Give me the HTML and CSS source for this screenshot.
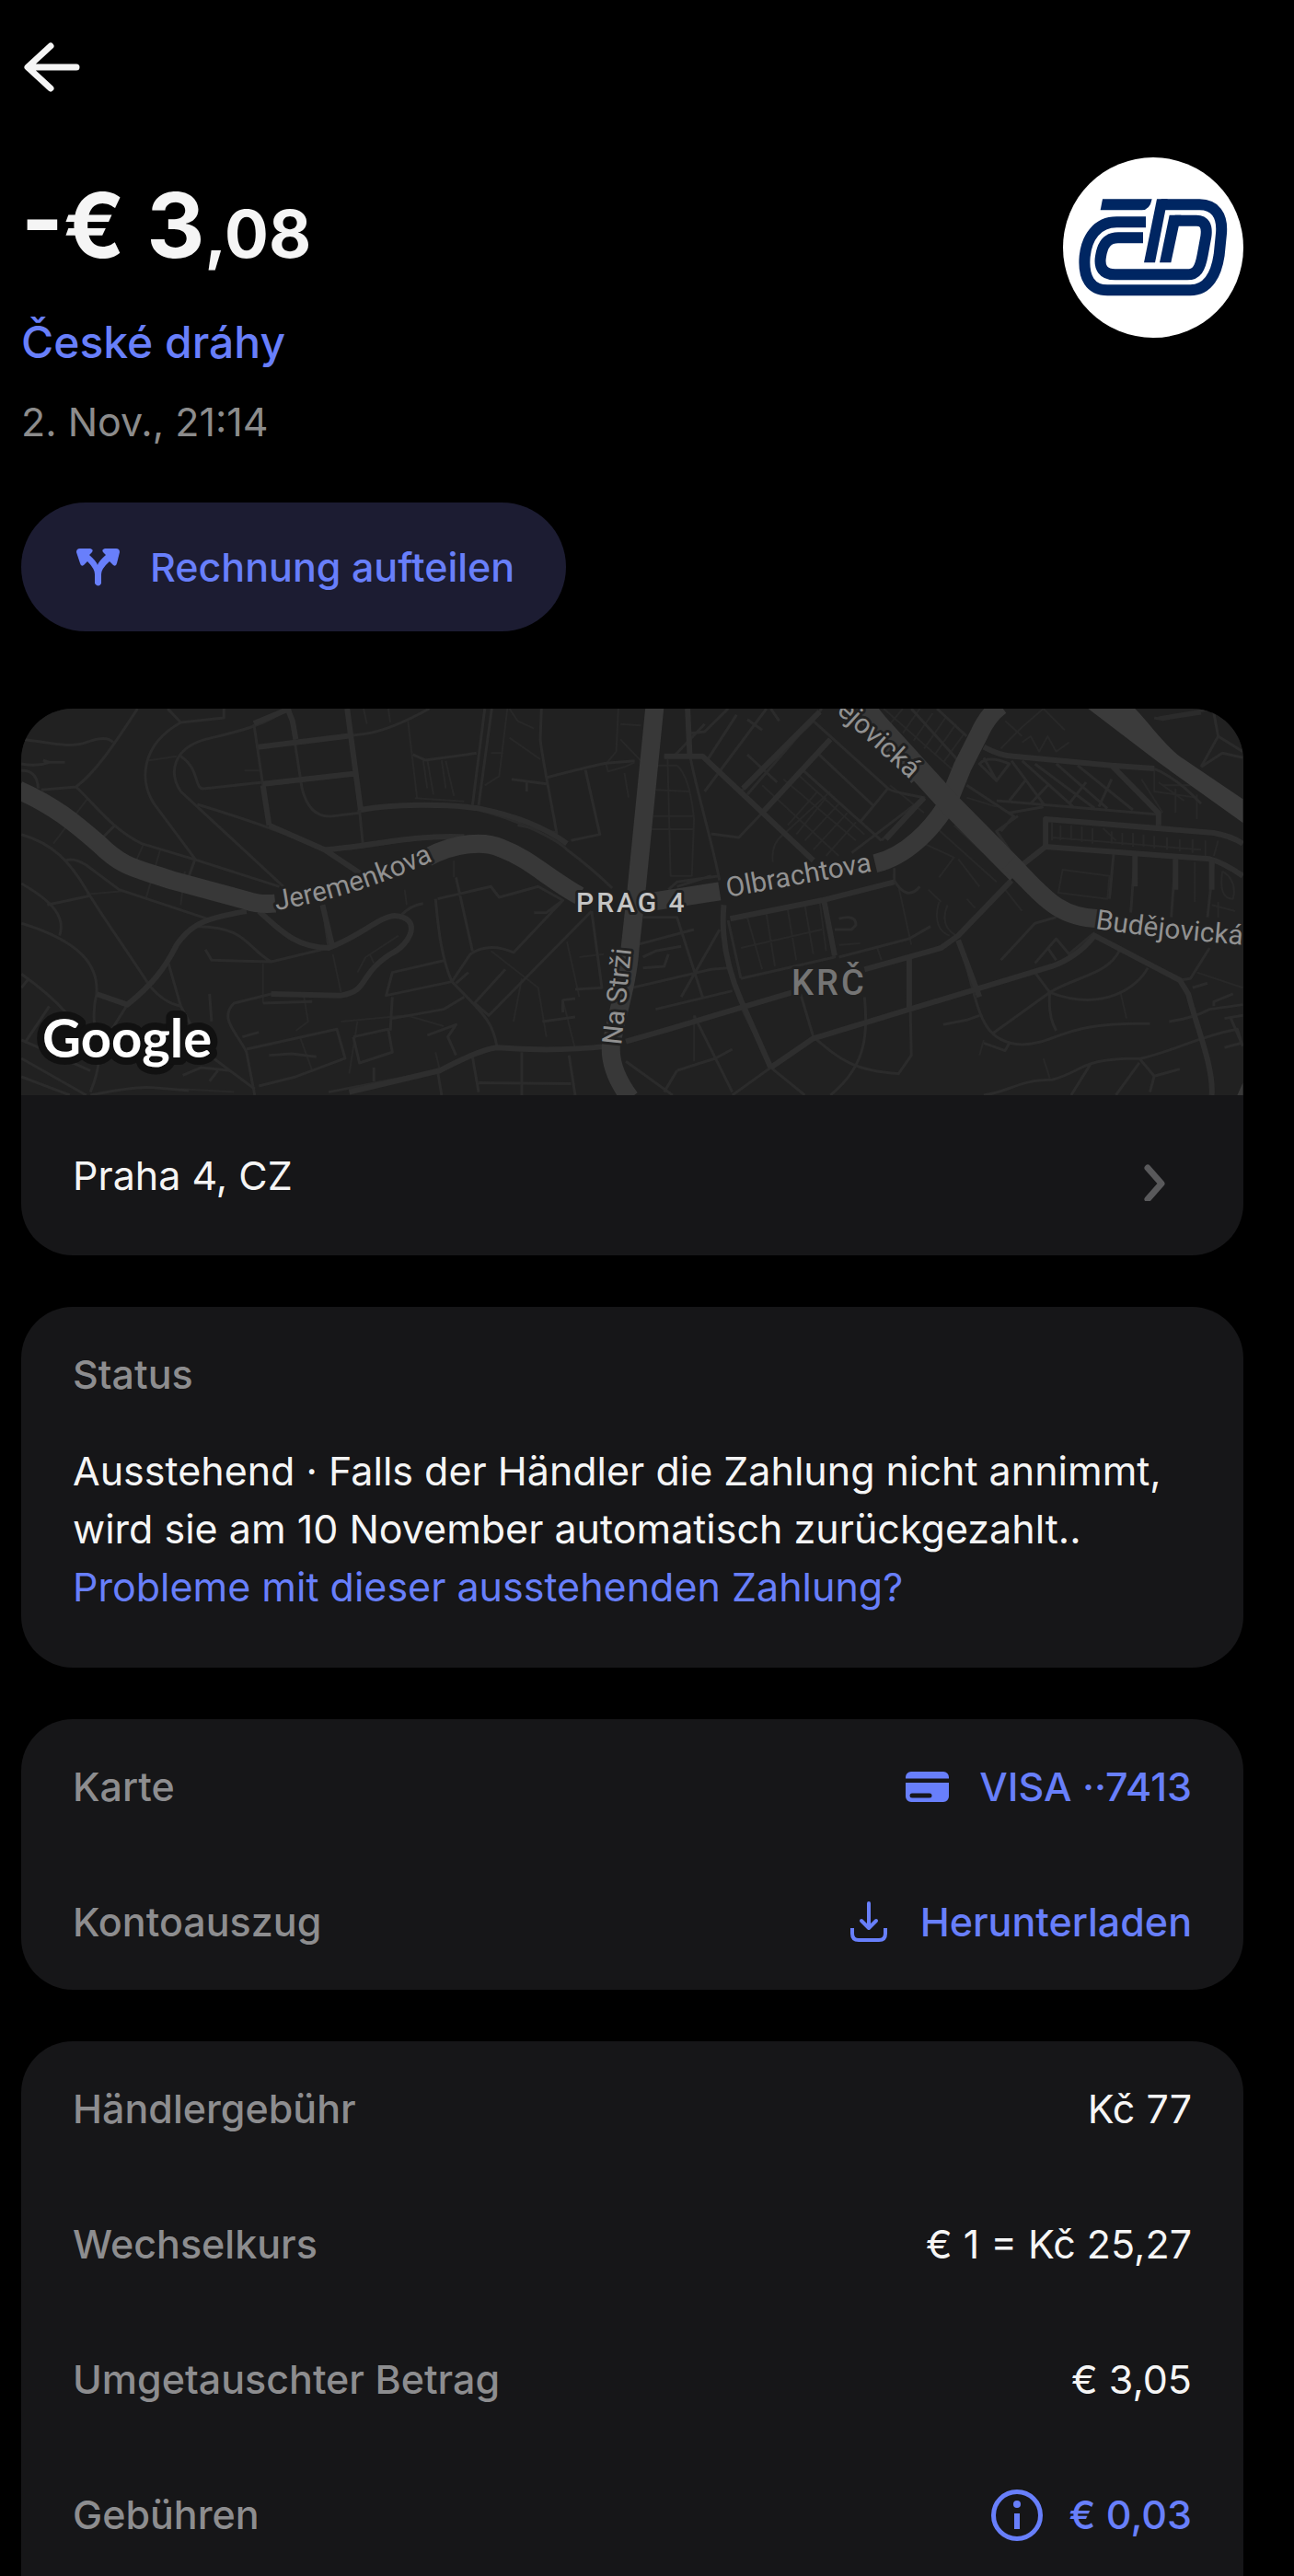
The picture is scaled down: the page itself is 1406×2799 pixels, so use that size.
FILE: index.html
```html
<!DOCTYPE html>
<html lang="de">
<head>
    <meta charset="UTF-8">
    <meta name="viewport" content="width=device-width, initial-scale=1.0">
    <title>České dráhy</title>
    <link rel="stylesheet" href="styles.css">
</head>
<body>

<main class="page">
    <button class="back" aria-label="Zurück">
        <svg width="68" height="60" viewBox="0 0 68 60"><path d="M60 30H8M32 7L7 30l25 23"/></svg>
    </button>

    <header class="summary">
        <div>
            <h1 class="amount">-€ 3<span class="cents">,08</span></h1>
            <a class="merchant" href="#">České dráhy</a>
            <p class="date">2. Nov., 21:14</p>
        </div>
        <svg class="logo" viewBox="105 62 588 588">
            <circle cx="399" cy="356" r="294" fill="#fff"/>
            <g fill="none" stroke="#002662" stroke-width="36">
                <path d="M375 273H280C215 273 182 325 176 385C170 455 195 495 250 495H520C580 495 605 440 614 380L621 310C626 250 600 216 550 216H425"/>
                <path d="M366 324H285C250 324 234 345 228 385C222 420 235 444 275 444H510C540 444 552 425 560 380L571 320C576 285 565 268 540 268H470"/>
            </g>
            <g fill="#002662">
                <path d="M234 198H395Q388 234 362 234H227Z"/>
                <path d="M411 198H446L405 405H369Z"/>
                <path d="M452 250H490L457 405H420Z"/>
            </g>
        </svg>
    </header>

    <button class="split">
        <svg class="icon" viewBox="0 0 56 56">
            <path d="M8 8h11q4 1 2 4l-3 3q8 7 9 11q1-4 9-11l-3-3q-2-3 2-4h12q4 0 4 4l-3 12q-1 4-4 2l-4-4q-9 8-9 14v10q-3 5-7 0V36q0-6-8-14l-4 4q-3 2-4-2L4 12q0-4 4-4z" fill="currentColor"/>
        </svg>
        Rechnung aufteilen
    </button>

    <section class="card">
        <svg class="map" viewBox="0 0 1328 420" preserveAspectRatio="xMidYMid slice">
            <!-- western half -->
            <g class="roads" transform="translate(-23 -20) scale(.4464 .3333)">
                <g class="path">
                    <path d="M355 230L430 215M595 262H635M885 60L893 110M945 60L950 105M993 100L1015 350M1040 225L1055 340M1085 230L1105 345M1030 228L1040 320M1075 228L1085 320M1010 352L1130 362M1235 60L1215 280L1180 310M1240 60L1260 100L1300 125M1240 155L1315 225M1195 205H1225"/>
                    <path d="M350 500L330 560M390 520L355 680M450 590L440 700M300 655L210 665M215 350L130 500M640 890V1020M810 860L830 985M985 650L990 700M1105 555V610M1270 940L1250 1080M1195 850L1310 970L1330 1130M1380 820L1410 1000M1410 870L1470 860M1370 1010L1400 1170M870 920L890 870L970 800M900 860L910 890M740 1000L750 1080L720 1110M870 1080L850 1250M830 1080L990 1060L1080 1095M730 1130L760 1240M1060 1180L1070 1235"/>
                    <path d="M1505 60L1500 200L1475 240L1480 265L1520 250L1545 235M1510 110L1560 115M1510 160L1560 230M1520 270L1530 350M440 1300L570 1310"/>
                </g>
                <g class="street">
                    <path d="M335 60C290 150 240 260 185 315L100 325M52 160C120 170 170 190 210 170Q260 145 275 170M52 240Q90 250 120 235H158M105 228L120 235M52 262Q90 260 93 320M185 315C230 370 270 450 345 500L470 550L680 640"/>
                    <path d="M408 60L440 105L545 90V60M440 105C340 180 340 300 375 370L475 550L460 605M700 60C640 120 560 140 500 160C420 190 410 270 440 330L690 640M440 215C490 260 470 330 500 320L640 300"/>
                    <path d="M618 110L640 310L655 440M705 60L735 320C750 400 780 415 810 410L875 400M1045 60Q950 130 890 142L630 185M845 60L875 390L883 500M640 310L860 275M870 395C930 380 1060 350 1165 390C1260 420 1360 490 1380 520Q1440 580 1490 645M480 372C600 420 720 480 790 520L880 600M800 520C900 520 1000 470 1130 480M1180 60L1150 375M1197 60L1165 375"/>
                    <path d="M1005 210L1035 228L1160 205M1318 60L1315 160C1320 220 1330 280 1355 465L1260 440M1330 285Q1430 250 1475 238L1545 230M1425 260L1460 470L1390 490M1245 290L1330 305M1282 300V330"/>
                    <path d="M52 470C130 500 170 560 210 650C260 760 310 850 365 965Q400 1020 440 1030M160 555Q180 545 210 570L290 650L505 745M220 670L115 700M280 440L250 480M52 630C130 690 160 740 145 800"/>
                    <path d="M52 760C200 820 240 900 235 990C210 1130 270 1150 220 1310M235 990L310 1025M52 925Q120 990 160 1050L210 1140M52 970L70 940M120 1030L60 1150M52 1140L220 1240M52 1200L210 1320M52 1260L170 1320"/>
                    <path d="M600 720C520 740 470 750 430 830C400 910 370 960 310 1025L270 1110M630 720C680 780 720 840 800 840C880 800 920 740 960 735C1030 740 1000 830 950 860C870 930 900 980 830 995L660 990L570 1020C530 1070 580 1120 600 1180L620 1320M480 770C600 770 600 840 660 885L515 880L500 845M660 885L800 840L785 700"/>
                    <path d="M410 890L440 1030L500 1180L620 1300M510 990L515 1080M640 1020L760 1015M600 1170L820 1105L840 1200L720 1260L630 1290M655 1190L710 1185L770 1195M590 1130L630 1115M860 1130L945 1105L955 1180L875 1215L860 1130M800 1310L1070 1240Q1170 1170 1210 1165Q1350 1180 1480 1160"/>
                    <path d="M975 735Q1000 700 1030 695M1065 680L1195 640L1215 675L1310 640L1370 685L1250 855Q1190 820 1145 860L1100 950C1070 860 1065 740 1060 680M1110 610L1150 850M1100 950L940 995L955 920L1085 880M1100 950C1180 1060 1200 1080 1210 1165M1370 685L1330 725H1300M1440 720L1190 1060L1155 1020L1230 910M1110 955L1140 920M1440 720L1465 970L1400 975M1320 1080L1400 1065M1370 1050V1010L1400 1005"/>
                    <path d="M955 1000L950 1110M955 1070L1080 1040L1130 1000M1040 1125L1110 1090L1090 1130L1110 1190M1150 1195L1165 1310M1270 1180V1320M1385 1190L1400 1320M1165 1280L1390 1283M220 1320Q330 1290 370 1295L460 1305M445 1255L490 1230L560 1240M510 1275L530 1240M910 1230V1275M1065 1240L1075 1320"/>
                </g>
                <g class="collector">
                    <path d="M700 60L712 100L720 160M618 108Q670 80 700 62M628 185L855 148M640 305L860 272M845 60L878 390M655 440L640 310M878 390C960 370 1080 370 1165 385C1260 410 1330 450 1380 500M655 440L790 520L880 600M790 520C900 510 1000 470 1130 478"/>
                    <path d="M600 720C520 740 470 750 430 830C400 910 370 960 310 1025L235 990M630 720C680 780 720 840 800 840C880 800 920 740 960 735C1030 740 1000 830 950 860C870 930 900 980 830 995L660 990M785 700L810 840M850 1310L1070 1240Q1170 1170 1210 1165Q1350 1180 1480 1160"/>
                </g>
                <g class="main">
                    <path d="M45 325C130 375 180 430 240 500C300 580 330 580 420 620L600 685Q630 700 670 695"/>
                    <path d="M1040 545C1110 495 1180 490 1220 515C1290 550 1330 610 1410 670"/>
                </g>
            </g>
            <!-- eastern half -->
            <g class="roads" transform="translate(657 -20) scale(.463 .3333)">
                <g class="path">
                    <path d="M75 245H120Q150 280 160 420L155 605H105L98 225M70 325L150 330M65 410H160M60 453H158M320 310L500 540M345 560Q340 500 370 470L480 330M370 290L540 490M400 270L560 470M380 440L450 330M400 470L470 350M420 490L500 370M440 520L520 400M470 540L540 430"/>
                    <path d="M605 60L800 300M650 60L620 110M690 60L650 140M720 75L675 165M750 90L700 190M775 110L725 210M795 140L745 235M620 310L700 400M730 450L870 625M770 440L840 530M700 500L770 545L735 610M780 550L830 640M640 640L670 830"/>
                    <path d="M880 190L930 120L980 60L1030 130M930 170L950 150L970 200L990 150L1010 200L1040 170M890 100L930 150M1000 430V490M1020 440V490M1045 440V490M1070 445V495M1095 450V500M1120 450L1150 490M1140 460V500M1165 465V505M1190 465V510M1215 470V510M1240 475V515M1270 480V520M1300 485V525M1330 485V530M1360 490V540M1390 490L1380 540M1000 480L1350 520"/>
                    <path d="M1025 585L1135 605L1130 680L1015 660ZM1335 560V690M1400 590Q1435 620 1425 680Q1390 680 1400 590M1375 700L1430 720M1390 690V740M285 740L320 910M330 730L350 900M380 715L400 880M420 700L440 860M455 690L470 850M270 840L460 780M500 830L550 825M800 680L820 710M890 650L930 720M735 690C720 760 740 790 760 800M755 700C740 750 750 780 775 800M710 650L740 690"/>
                    <path d="M800 350L870 380M1240 250V330L1340 350M1250 300L1310 360M1290 320V400M1340 340V420M1260 310L1350 310M1210 290L1260 400M160 1060V1210M840 1140L830 1190M980 1200L995 1265M1160 980L1175 1070M1340 920L1448 970M590 840L600 880"/>
                </g>
                <g class="street">
                    <path d="M150 140L185 135L240 60M185 110L110 220M260 80L190 230M330 60L185 330M285 95L320 130M285 210L355 300M340 60L360 100M440 100L270 330M460 60L285 340M480 160L320 400M440 100L615 320L550 430M450 205L580 375M415 260L600 490M615 320Q620 330 700 350L600 490M90 215H180L440 555M145 60L150 210C170 350 200 480 220 620M200 468L265 480L320 400M700 350L530 530"/>
                    <path d="M670 60L800 260M730 60L800 150M840 220L870 295L900 240Q850 210 830 240L870 295M905 230L980 370M930 230L1050 380M960 240L1100 385M1010 240L1130 385M1060 245L1190 390M870 360L1250 405M900 360L940 290M950 370L990 310M1040 370L1080 300M1110 380L1140 290M900 400L980 380M880 460L910 410L800 310M900 520L870 460L920 410"/>
                    <path d="M1250 90L1380 60M1350 250L1390 150L1380 75L1440 60M1390 150L1448 200M1350 250L1400 205L1448 220M1240 90L1260 95L1350 75M1230 250Q1290 280 1350 370"/>
                    <path d="M630 580V620Q660 690 690 640M500 745Q540 730 540 765L530 780H490M500 870L665 810L715 770M270 940L490 870L465 685M240 750L270 940M25 830L160 780M15 970L200 910L240 905M70 1040L250 980M40 740H120L180 1000M130 1000L220 780M40 870L70 850L130 835M40 905L90 900L100 860M120 640L200 605M100 650L120 625L220 605"/>
                    <path d="M410 990L440 1130C500 1200 530 1240 640 1250L670 1190L665 870M560 1000C570 1130 560 1230 480 1320M270 1030L340 1230L420 1320M440 1130L250 1320M160 1060L250 1310M120 1240L210 1200L250 1170M90 1310L120 1240M0 1210L110 1320M780 815C830 1010 820 1150 930 1155C1020 1150 1020 1080 1230 1087M745 1090L800 1075L830 1060M860 1120L995 985L960 920M995 985C1120 1050 1200 970 1225 905M995 985C1060 930 1130 930 1160 845M995 985Q990 1060 1010 1110M840 1150L890 1175L900 1150"/>
                    <path d="M1100 790L1040 860L1010 810L960 890M990 840L1010 880M1010 740L960 760L880 880M1145 530L1135 680M1195 535L1185 725M1290 545L1280 740M1380 550L1365 740M1370 840L1325 940L1300 945M1275 1080Q1330 1070 1370 1040L1448 1025M1380 1030V1015L1425 990M1330 970L1365 955M1405 1070L1448 1060M1405 1165L1445 1150L1435 1105C1340 1130 1300 1170 1210 1200C1060 1200 1080 1240 1000 1270C920 1270 900 1310 840 1320M1090 1220L1045 1320M1205 1200L1240 1258L1300 1235M1240 1258L1230 1310M1205 1215L1150 1320M1448 1160L1420 1070"/>
                </g>
                <g class="collector">
                    <path d="M145 60L150 210M90 215H180L440 555M455 70L275 320M480 160L320 400M840 185Q880 215 910 215L1140 245L1250 400V440M1140 245L1240 255M985 510V420L1380 465Q1420 475 1448 500M930 570L985 510L1370 550Q1400 560 1448 605"/>
                    <path d="M245 745L460 685L630 625M230 700Q220 850 270 1010L340 1230M465 685L490 865M0 1145L100 1105L390 985M560 910L740 840L780 800L905 620M340 1230L440 1135L1000 900Q1060 870 1100 800L1300 945L1320 990C1340 1100 1380 1230 1375 1320M610 485L700 350M1195 540V640M1290 550V650M1375 550V650M780 815L830 1000M665 870V1040"/>
                </g>
                <g class="main">
                    <path d="M68 50L25 650L10 840C5 950 -20 1050 -35 1160Q-38 1240 10 1330" />
                    <path d="M60 690L220 655M585 565C660 540 720 450 755 370L790 250L830 140Q850 80 880 50"/>
                    <path class="wide" d="M550 50L760 370L920 595M560 60L690 280"/>
                    <path d="M900 560C980 670 1010 740 1110 745"/>
                </g>
                <path d="M1085 60H1195C1230 110 1270 190 1310 225L1448 355V432L1250 235Z" fill="#3b3b3b"/>
                <path d="M1448 1280L1435 1320H1448Z" fill="#383838"/>
            </g>
            <path id="jeremenkova" d="M277 219Q370 204 465 157" fill="none"/>
            <path id="olbrachtova" d="M768 205Q850 190 940 174" fill="none"/>
            <path id="budejovickaNorth" d="M872 -10L886 4Q925 40 966 77" fill="none"/>
            <path id="budejovickaEast" d="M1167 239Q1250 252 1400 262" fill="none"/>
            <g class="labels">
                <text><textPath href="#jeremenkova">Jeremenkova</textPath></text>
                <text><textPath href="#olbrachtova">Olbrachtova</textPath></text>
                <text text-anchor="end"><textPath href="#budejovickaNorth" startOffset="100%">ějovická</textPath></text>
                <text><textPath href="#budejovickaEast">Budějovická</textPath></text>
                <text transform="translate(652 366) rotate(-84)">Na Strži</text>
                <text class="city" x="603" y="221">PRAG 4</text>
                <text class="district" x="837" y="311">KRČ</text>
                <text class="google" x="23" y="379">Google</text>
            </g>
        </svg>
        <a class="row place" href="#">
            <span>Praha 4, CZ</span>
            <svg class="chevron" width="56" height="56" viewBox="0 0 56 56"><path d="M20 20l15 17l-15 17"/></svg>
        </a>
    </section>

    <section class="card status">
        <h2 class="row label">Status</h2>
        <p>Ausstehend · Falls der Händler die Zahlung nicht annimmt, wird sie am 10 November automatisch zurückgezahlt..<br>
        <a href="#">Probleme mit dieser ausstehenden Zahlung?</a></p>
    </section>

    <dl class="card">
        <div class="row">
            <dt class="label">Karte</dt>
            <dd><a class="action" href="#">
                <svg class="icon" viewBox="0 0 56 56">
                    <path d="M4 18.500V17a6 6 0 0 1 6-6H45a6 6 0 0 1 6 6v1.500zM4 23H51V38a6 6 0 0 1-6 6H10a6 6 0 0 1-6-6z" fill="currentColor"/>
                    <path d="M11 37H30" stroke="#17171c" stroke-width="5" stroke-linecap="round"/>
                </svg>
                VISA ··7413</a></dd>
        </div>
        <div class="row">
            <dt class="label">Kontoauszug</dt>
            <dd><a class="action" href="#">
                <svg class="icon" viewBox="0 0 56 56" fill="none" stroke="currentColor" stroke-width="4">
                    <path d="M28 7V33M20 26l8 8l8-8" stroke-linecap="round" stroke-linejoin="round"/>
                    <path d="M10 34V40Q10 47 17 47H39Q46 47 46 40V34"/>
                </svg>
                Herunterladen</a></dd>
        </div>
    </dl>

    <dl class="card last">
        <div class="row"><dt class="label">Händlergebühr</dt><dd>Kč 77</dd></div>
        <div class="row"><dt class="label">Wechselkurs</dt><dd>€ 1 = Kč 25,27</dd></div>
        <div class="row"><dt class="label">Umgetauschter Betrag</dt><dd>€ 3,05</dd></div>
        <div class="row">
            <dt class="label">Gebühren</dt>
            <dd><a class="action" href="#">
                <svg class="icon" viewBox="0 0 56 56">
                    <circle cx="28" cy="28" r="25.500" fill="none" stroke="currentColor" stroke-width="5"/>
                    <circle cx="28" cy="16" r="4" fill="currentColor"/>
                    <path d="M25 26h6v17h-6z" fill="currentColor"/>
                </svg>
                € 0,03</a></dd>
        </div>
    </dl>
</main>

</body>
</html>
```
FILE: styles.css
```css
* {
    box-sizing: border-box;
    margin: 0;
    padding: 0;
}
body {
    background: #000;
    color: #f5f5f5;
    font-family: Inter, "Liberation Sans", sans-serif;
    font-size: 43px;
    line-height: 63px;
}
a {
    color: #687ffb;
    text-decoration: none;
}
button {
    border: none;
    font: inherit;
    cursor: pointer;
}
svg { display: block; }
.page {
    height: 100vh;
    overflow: hidden;
    padding: 43px 55px 0 23px;
}
.back {
    display: block;
    background: none;
    color: #f5f5f5;
}
.back svg, .chevron {
    fill: none;
    stroke: currentColor;
    stroke-width: 7;
    stroke-linecap: round;
    stroke-linejoin: round;
}

/* Header */
.summary {
    display: flex;
    justify-content: space-between;
    align-items: flex-start;
    margin-top: 68px;
}
.amount {
    font-size: 98px;
    font-weight: 700;
    line-height: 148px;
}
.cents {
    font-size: 71px;
    line-height: 1;
}
.merchant {
    display: block;
    margin-top: 18px;
    font-size: 48px;
    font-weight: 500;
    line-height: 70px;
}
.date {
    margin-top: 20px;
    color: #8c8c8c;
}
.logo {
    width: 196px;
    height: 196px;
    flex: none;
}
.split {
    display: flex;
    align-items: center;
    gap: 28px;
    height: 140px;
    margin-top: 56px;
    padding: 0 56px;
    border-radius: 70px;
    background: #1c1c32;
    color: #687ffb;
    font-weight: 500;
}
.icon {
    width: 56px;
    height: 56px;
    flex: none;
}

/* Cards */
.card {
    margin-top: 56px;
    border-radius: 56px;
    background: #161618;
    overflow: hidden;
}
.split + .card { margin-top: 84px; }
.row {
    display: flex;
    justify-content: space-between;
    align-items: center;
    min-height: 147px;
    padding: 0 56px;
}
.label {
    color: #8d8d8f;
    font-size: 43px;
    font-weight: 500;
}
.place {
    min-height: 174px;
    padding-right: 68px;
    color: #f5f5f5;
}
.chevron { color: #59595b; }
.status p { padding: 0 56px 56px; }
.action {
    display: flex;
    align-items: center;
    gap: 28px;
    font-weight: 500;
}
.last { padding-bottom: 56px; }

/* Map */
.map {
    width: 100%;
    height: 420px;
    background: #212121;
}
.roads path { vector-effect: non-scaling-stroke; }
.path, .street, .collector, .main {
    fill: none;
    stroke-linejoin: round;
}
.path { stroke: #282828; stroke-width: 2; }
.street { stroke: #2b2b2b; stroke-width: 3; }
.collector { stroke: #2e2e2e; stroke-width: 6; }
.main { stroke: #383838; stroke-width: 20; }
.main .wide { stroke-width: 24; }
.labels {
    font-family: Roboto, sans-serif;
    font-size: 30px;
    fill: #919191;
    stroke: #212121;
    stroke-width: 6;
    stroke-linejoin: round;
    paint-order: stroke;
}
.city {
    fill: #c4c4c4;
    font-weight: 500;
    letter-spacing: 3px;
}
.district {
    fill: #757575;
    font-size: 38px;
    font-weight: 500;
    letter-spacing: 3px;
}
.google {
    fill: #fff;
    stroke: #111;
    stroke-width: 16;
    font-family: Lato, sans-serif;
    font-size: 58px;
    font-weight: 700;
}
```
